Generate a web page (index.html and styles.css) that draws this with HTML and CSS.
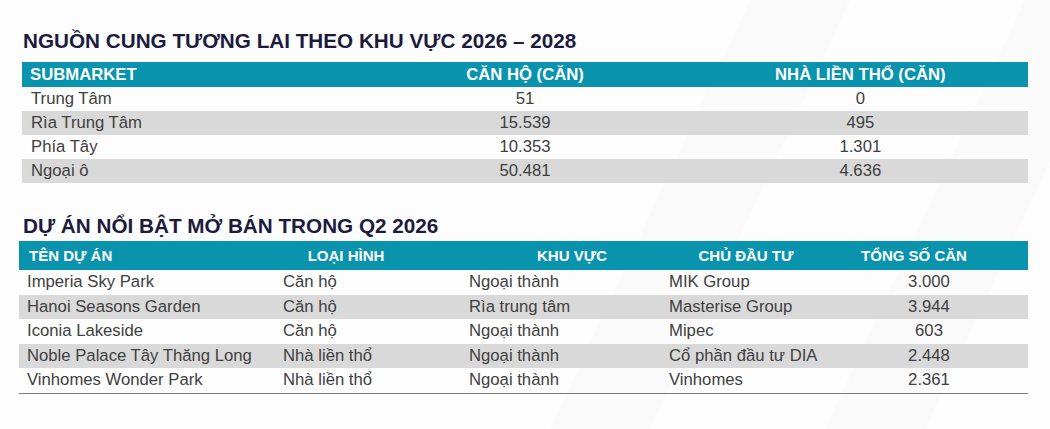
FILE: index.html
```html
<!DOCTYPE html>
<html lang="vi">
<head>
<meta charset="utf-8">
<title>Nguồn cung</title>
<link rel="stylesheet" href="styles.css">
</head>
<body>
<main class="page">
  <h2 class="title title-1">NGUỒN CUNG TƯƠNG LAI THEO KHU VỰC 2026 – 2028</h2>
  <div class="table t1">
    <div class="row head">
      <div class="c first">SUBMARKET</div>
      <div class="c ctr">CĂN HỘ (CĂN)</div>
      <div class="c ctr">NHÀ LIỀN THỔ (CĂN)</div>
    </div>
    <div class="row">
      <div class="c first">Trung Tâm</div>
      <div class="c ctr">51</div>
      <div class="c ctr">0</div>
    </div>
    <div class="row alt">
      <div class="c first">Rìa Trung Tâm</div>
      <div class="c ctr">15.539</div>
      <div class="c ctr">495</div>
    </div>
    <div class="row">
      <div class="c first">Phía Tây</div>
      <div class="c ctr">10.353</div>
      <div class="c ctr">1.301</div>
    </div>
    <div class="row alt">
      <div class="c first">Ngoại ô</div>
      <div class="c ctr">50.481</div>
      <div class="c ctr">4.636</div>
    </div>
  </div>

  <h2 class="title title-2">DỰ ÁN NỔI BẬT MỞ BÁN TRONG Q2 2026</h2>
  <div class="table t2">
    <div class="row head">
      <div class="c h1">TÊN DỰ ÁN</div>
      <div class="c h2">LOẠI HÌNH</div>
      <div class="c h3">KHU VỰC</div>
      <div class="c h4">CHỦ ĐẦU TƯ</div>
      <div class="c h5">TỔNG SỐ CĂN</div>
    </div>
    <div class="row">
      <div class="c">Imperia Sky Park</div>
      <div class="c">Căn hộ</div>
      <div class="c">Ngoại thành</div>
      <div class="c">MIK Group</div>
      <div class="c num">3.000</div>
    </div>
    <div class="row alt">
      <div class="c">Hanoi Seasons Garden</div>
      <div class="c">Căn hộ</div>
      <div class="c">Rìa trung tâm</div>
      <div class="c">Masterise Group</div>
      <div class="c num">3.944</div>
    </div>
    <div class="row">
      <div class="c">Iconia Lakeside</div>
      <div class="c">Căn hộ</div>
      <div class="c">Ngoại thành</div>
      <div class="c">Mipec</div>
      <div class="c num">603</div>
    </div>
    <div class="row alt">
      <div class="c">Noble Palace Tây Thăng Long</div>
      <div class="c">Nhà liền thổ</div>
      <div class="c">Ngoại thành</div>
      <div class="c">Cổ phần đầu tư DIA</div>
      <div class="c num">2.448</div>
    </div>
    <div class="row">
      <div class="c">Vinhomes Wonder Park</div>
      <div class="c">Nhà liền thổ</div>
      <div class="c">Ngoại thành</div>
      <div class="c">Vinhomes</div>
      <div class="c num">2.361</div>
    </div>
  </div>
</main>
</body>
</html>
```

FILE: styles.css
```css
html, body {
  margin: 0;
  padding: 0;
}
body {
  width: 1050px;
  height: 429px;
  overflow: hidden;
  font-family: "Liberation Sans", Arial, sans-serif;
  background-color: #fdfdfd;
  background-image:
    linear-gradient(115deg, transparent 0 60%, #fafafb 60% 68%, transparent 68% 100%),
    linear-gradient(115deg, transparent 0 82%, #fafafb 82% 90%, transparent 90% 100%);
}
.page {
  padding: 29px 22px 0 19px;
  display: flex;
  flex-direction: column;
}
.title {
  margin: 0;
  font-size: 20.7px;
  line-height: 24px;
  font-weight: bold;
  color: #1c1b3e;
  padding-left: 4px;
}
.title-1 {
  margin-bottom: 9px;
}
.title-2 {
  margin-top: 31px;
  margin-bottom: 3px;
}
.table {
  display: flex;
  flex-direction: column;
  color: #404040;
}
.t1 {
  margin-left: 3px;
}
.row {
  display: grid;
  align-items: center;
}
.t1 .row {
  grid-template-columns: 1fr 1fr 1fr;
  height: 24px;
  font-size: 16.7px;
}
.t1 .row.head {
  height: 25px;
}
.row.head {
  background: #0993ad;
  color: #ffffff;
  font-weight: bold;
}
.row.alt {
  background: #d9d9d9;
}
.c {
  white-space: nowrap;
  line-height: 20px;
}
.t1 .first {
  padding-left: 8px;
}
.t1 .row:not(.head) .first {
  padding-left: 9px;
}
.ctr {
  text-align: center;
}
.t2 {
  border-bottom: 1.5px solid #7d7d7d;
}
.t2 .row {
  grid-template-columns: 256px 186px 200px 190px 1fr;
  height: 24.5px;
  font-size: 16.7px;
}
.t2 .row .c {
  padding-left: 8px;
}
.t2 .row.head {
  height: 29px;
  font-size: 15px;
}
.t2 .row.head .c {
  padding-left: 0;
  text-align: center;
}
.t2 .row.head .h1 {
  text-align: left;
  padding-left: 10px;
}
.t2 .row.head .h2 {
  padding-right: 44px;
}
.t2 .row.head .h3 {
  padding-left: 22px;
}
.t2 .row.head .h4 {
  padding-right: 20px;
}
.t2 .row.head .h5 {
  padding-right: 51px;
}
.t2 .row .num {
  padding-left: 0;
  text-align: center;
  padding-right: 21px;
}
```
